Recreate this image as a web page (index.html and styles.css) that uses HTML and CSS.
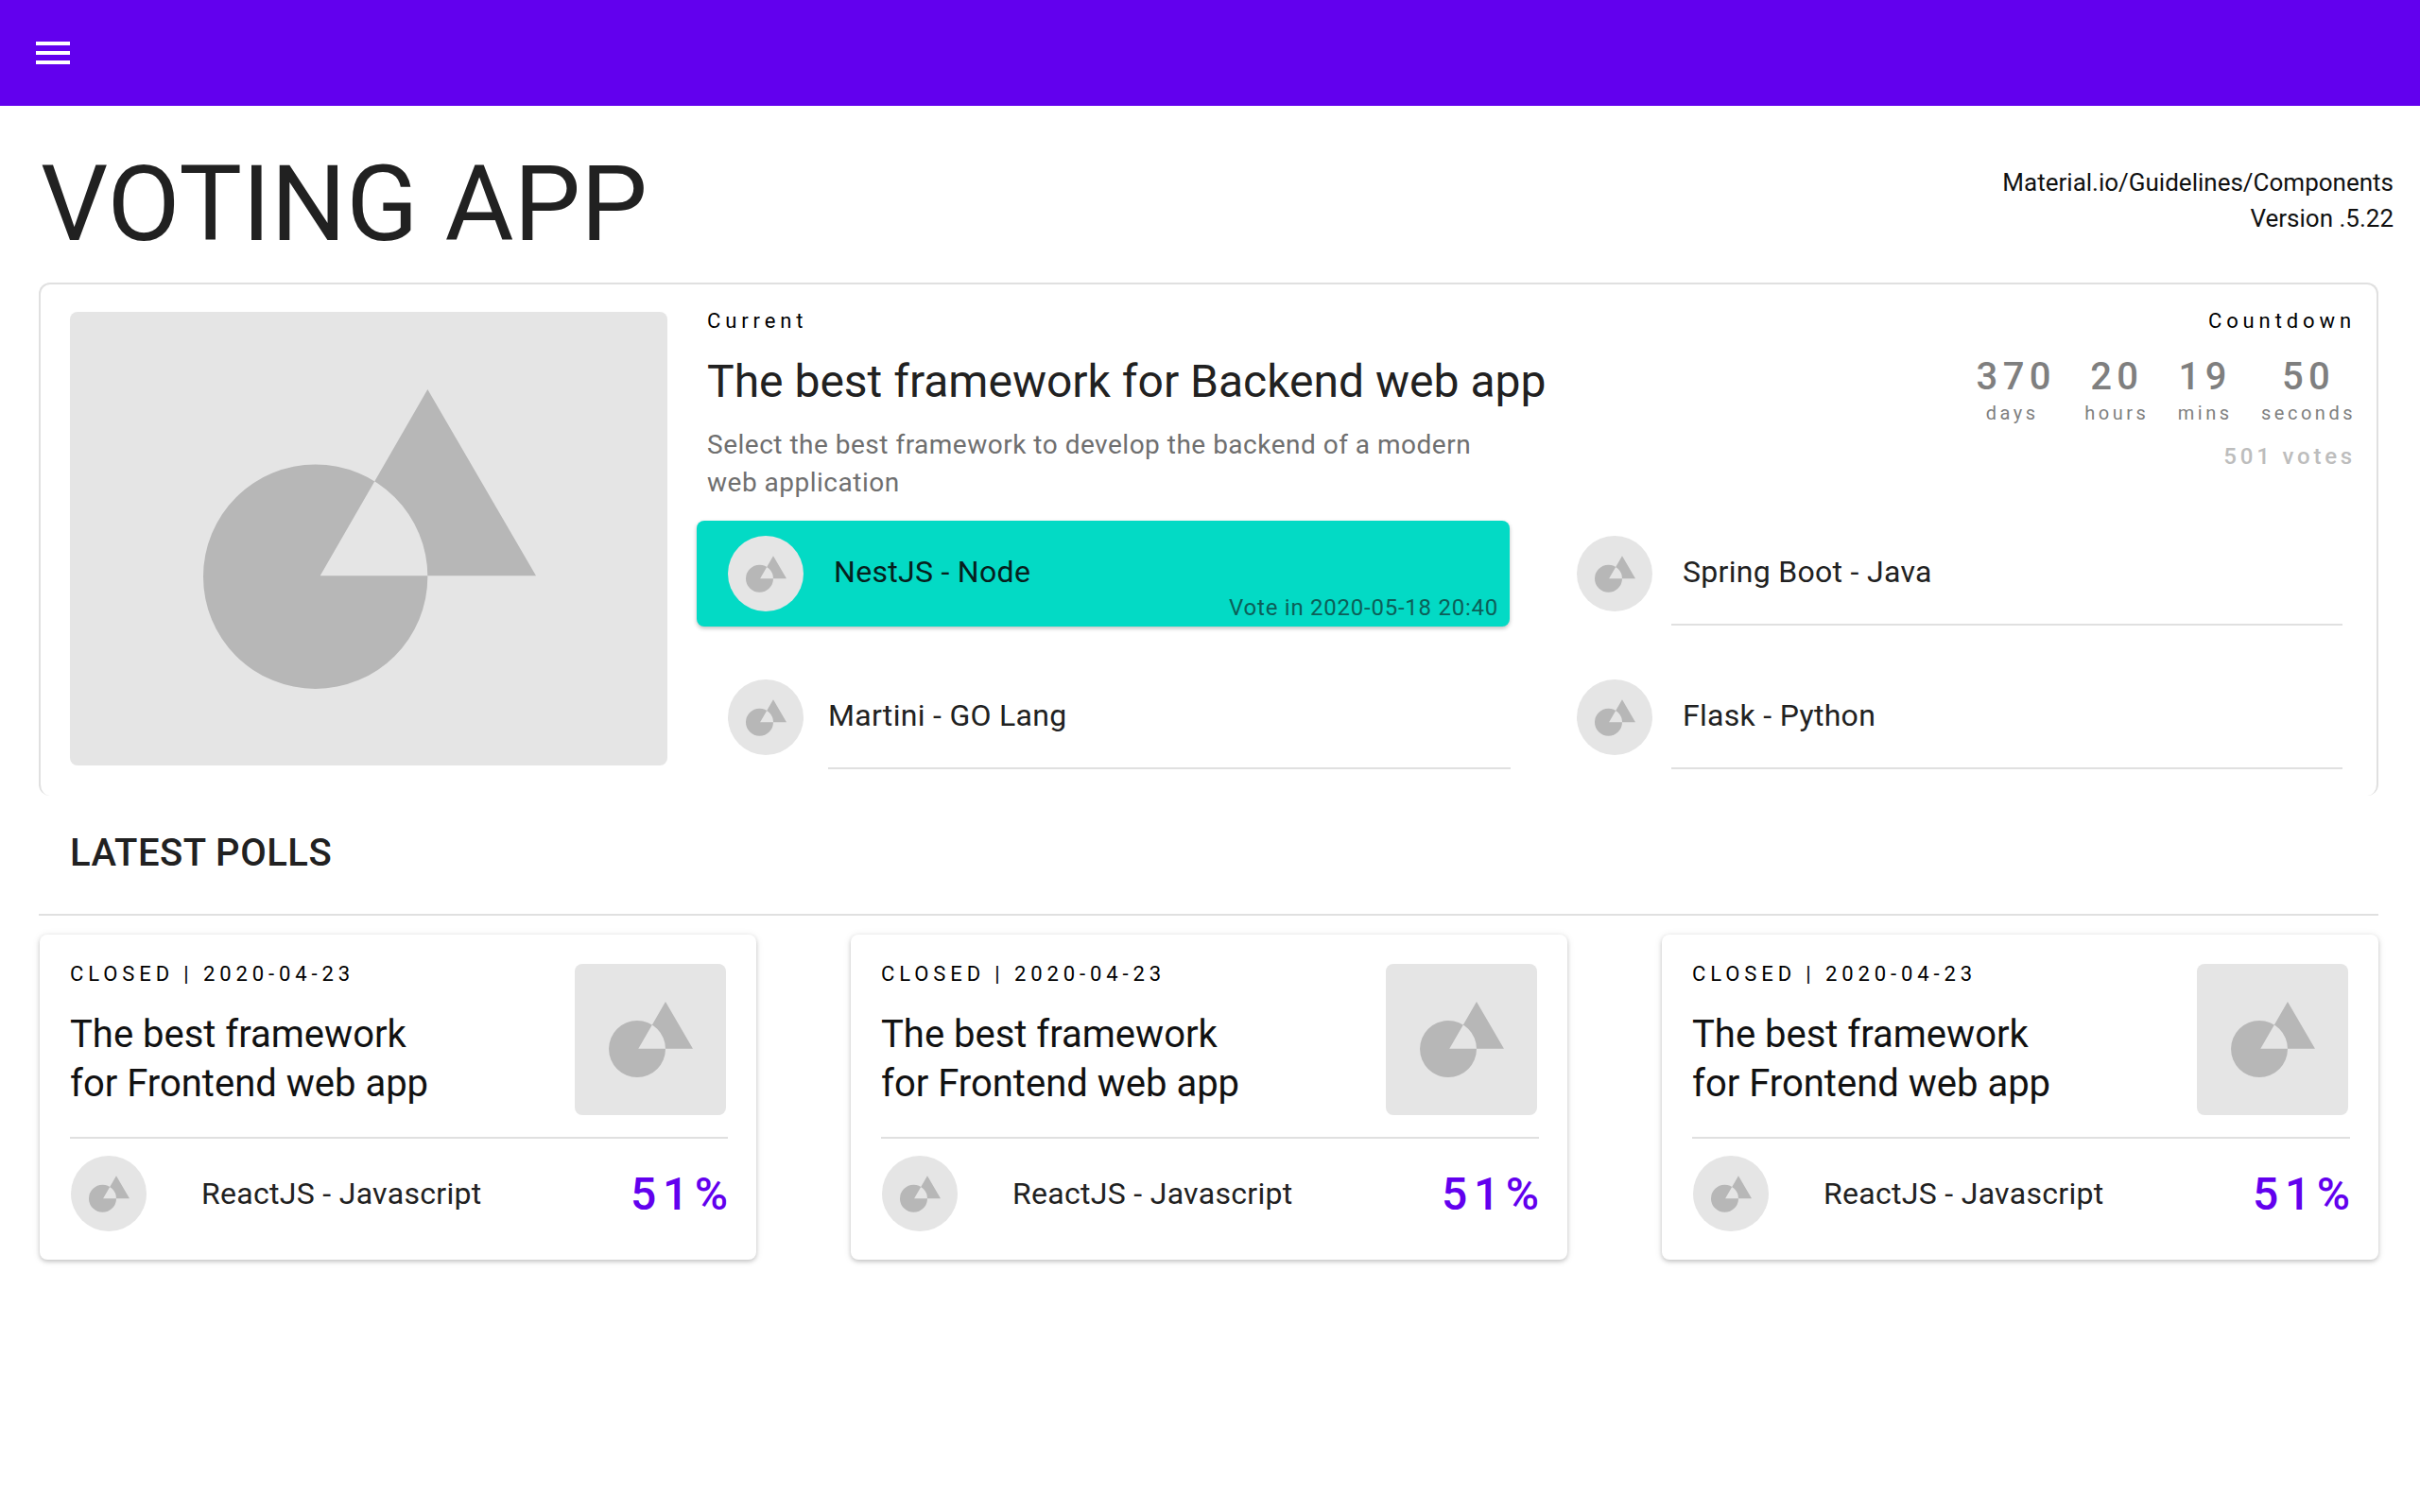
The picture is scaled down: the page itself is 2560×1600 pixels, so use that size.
FILE: index.html
```html
<!DOCTYPE html>
<html lang="en">
<head>
    <meta charset="UTF-8">
    <title>Voting App</title>
    <link rel="stylesheet" href="styles.css">
</head>
<body>
    <svg class="defs" width="0" height="0">
        <symbol id="placeholder" viewBox="0 0 350 315">
            <path fill-rule="evenodd" d="M0 197a118 118 0 0 0 236 0a118 118 0 0 0-236 0zM236 0L123 196H350z"/>
        </symbol>
    </svg>

    <!-- Top bar -->
    <header class="top-bar">
        <svg class="menu-icon" viewBox="0 0 36 24"><path d="M0 0h36v4H0zM0 10h36v4H0zM0 20h36v4H0z"/></svg>
    </header>

    <main class="page">
        <div class="title-row">
            <h1>VOTING APP</h1>
            <p class="meta">Material.io/Guidelines/Components<br>Version .5.22</p>
        </div>

        <!-- Current poll -->
        <section class="current">
            <div class="thumb thumb-large"><svg class="shape shape-large"><use href="#placeholder"/></svg></div>
            <div class="current-body">
                <div class="current-head">
                    <div class="current-text">
                        <div class="overline">Current</div>
                        <h2>The best framework for Backend web app</h2>
                        <p class="desc">Select the best framework to develop the backend of a modern web application</p>
                    </div>
                    <div class="countdown">
                        <div class="overline">Countdown</div>
                        <div class="timer">
                            <div class="unit unit-days"><b>370</b><span>days</span></div>
                            <div class="unit unit-hours"><b>20</b><span>hours</span></div>
                            <div class="unit unit-mins"><b>19</b><span>mins</span></div>
                            <div class="unit unit-secs"><b>50</b><span>seconds</span></div>
                        </div>
                        <div class="votes">501 votes</div>
                    </div>
                </div>
                <div class="options">
                    <div class="option option-selected">
                        <div class="avatar"><svg class="shape"><use href="#placeholder"/></svg></div>
                        <span class="option-name">NestJS - Node</span>
                        <span class="vote-time">Vote in 2020-05-18 20:40</span>
                    </div>
                    <div class="option option-right">
                        <div class="avatar"><svg class="shape"><use href="#placeholder"/></svg></div>
                        <span class="option-name">Spring Boot - Java</span>
                    </div>
                    <div class="option">
                        <div class="avatar"><svg class="shape"><use href="#placeholder"/></svg></div>
                        <span class="option-name">Martini - GO Lang</span>
                    </div>
                    <div class="option option-right">
                        <div class="avatar"><svg class="shape"><use href="#placeholder"/></svg></div>
                        <span class="option-name">Flask - Python</span>
                    </div>
                </div>
            </div>
        </section>

        <!-- Latest polls -->
        <h3>LATEST POLLS</h3>
        <section class="polls">
            <article class="poll">
                <div class="poll-top">
                    <div>
                        <div class="poll-status">CLOSED | 2020-04-23</div>
                        <div class="poll-title">The best framework<br>for Frontend web app</div>
                    </div>
                    <div class="thumb thumb-small"><svg class="shape shape-small"><use href="#placeholder"/></svg></div>
                </div>
                <div class="poll-result">
                    <div class="avatar"><svg class="shape"><use href="#placeholder"/></svg></div>
                    <span class="poll-winner">ReactJS - Javascript</span>
                    <span class="percent">51%</span>
                </div>
            </article>
            <article class="poll">
                <div class="poll-top">
                    <div>
                        <div class="poll-status">CLOSED | 2020-04-23</div>
                        <div class="poll-title">The best framework<br>for Frontend web app</div>
                    </div>
                    <div class="thumb thumb-small"><svg class="shape shape-small"><use href="#placeholder"/></svg></div>
                </div>
                <div class="poll-result">
                    <div class="avatar"><svg class="shape"><use href="#placeholder"/></svg></div>
                    <span class="poll-winner">ReactJS - Javascript</span>
                    <span class="percent">51%</span>
                </div>
            </article>
            <article class="poll">
                <div class="poll-top">
                    <div>
                        <div class="poll-status">CLOSED | 2020-04-23</div>
                        <div class="poll-title">The best framework<br>for Frontend web app</div>
                    </div>
                    <div class="thumb thumb-small"><svg class="shape shape-small"><use href="#placeholder"/></svg></div>
                </div>
                <div class="poll-result">
                    <div class="avatar"><svg class="shape"><use href="#placeholder"/></svg></div>
                    <span class="poll-winner">ReactJS - Javascript</span>
                    <span class="percent">51%</span>
                </div>
            </article>
        </section>
    </main>
</body>
</html>
```

FILE: styles.css
```css
* {
    margin: 0;
    padding: 0;
    box-sizing: border-box;
}

body {
    font-family: Roboto, "Noto Sans", sans-serif;
    background-color: #ffffff;
    color: #212121;
    min-height: 100vh;
}

.defs {
    display: block;
    height: 0;
}

.top-bar {
    height: 112px;
    background-color: #6200ee;
    display: flex;
    align-items: center;
    padding-left: 38px;
}

.menu-icon {
    width: 36px;
    height: 24px;
    fill: #ffffff;
}

.page {
    padding: 0 44px 100px 41px;
}

.title-row {
    height: 187px;
    display: flex;
    justify-content: space-between;
    margin-right: -16px;
}

h1 {
    font-size: 112px;
    font-weight: 400;
    line-height: 131px;
    margin-top: 38px;
    padding-left: 2px;
}

.meta {
    font-size: 26px;
    line-height: 38px;
    color: #111111;
    text-align: right;
    margin-top: 62px;
}

/* Current poll */
.current {
    height: 543px;
    border: 2px solid #e0e0e0;
    border-bottom: none;
    border-radius: 12px;
    display: flex;
    padding: 29px 0 0 31px;
}

.thumb {
    background-color: #e5e5e5;
    border-radius: 8px;
    display: flex;
    align-items: center;
    justify-content: center;
    flex-shrink: 0;
}

.thumb-large {
    width: 632px;
    height: 480px;
}

.thumb-small {
    width: 160px;
    height: 160px;
}

.shape {
    width: 43px;
    height: 39px;
    fill: #b7b7b7;
}

.shape-large {
    width: 352px;
    height: 317px;
    margin-left: 2px;
}

.shape-small {
    width: 89px;
    height: 80px;
}

.current-body {
    flex: 1;
    padding-left: 31px;
}

.current-head {
    height: 221px;
    display: flex;
    justify-content: space-between;
    padding: 0 22px 0 11px;
}

.overline {
    font-size: 22px;
    font-weight: 400;
    line-height: 26px;
    letter-spacing: 4.9px;
    color: #000000;
    margin-top: -3px;
}

h2 {
    font-size: 48px;
    font-weight: 400;
    line-height: 56px;
    margin-top: 23px;
}

.desc {
    width: 830px;
    font-size: 28px;
    line-height: 40px;
    letter-spacing: 0.5px;
    color: #6f6f6f;
    margin-top: 19px;
}

.countdown {
    display: flex;
    flex-direction: column;
    align-items: flex-end;
}

.timer {
    display: flex;
    gap: 30.5px;
    margin-top: 22px;
}

.unit {
    display: flex;
    flex-direction: column;
    align-items: center;
    color: #7f7f7f;
}

.unit b {
    font-size: 40px;
    font-weight: 500;
    line-height: 47px;
    letter-spacing: 5.3px;
}

.unit span {
    font-size: 20px;
    line-height: 24px;
    letter-spacing: 3.5px;
    margin-top: 3px;
}

.unit-days span {
    margin-right: 8px;
}

.votes {
    font-size: 24px;
    font-weight: 500;
    line-height: 27px;
    letter-spacing: 3.8px;
    color: #bdbdbd;
    margin-top: 21px;
}

.options {
    display: grid;
    grid-template-columns: 860px 843px;
    grid-auto-rows: 152px;
    column-gap: 38px;
}

.option {
    height: 112px;
    position: relative;
    display: flex;
    align-items: center;
    padding-left: 33px;
    font-size: 32px;
    letter-spacing: 0.3px;
}

.avatar {
    width: 80px;
    height: 80px;
    border-radius: 50%;
    background-color: #e5e5e5;
    display: flex;
    align-items: center;
    justify-content: center;
    flex-shrink: 0;
}

.option-name {
    flex: 1;
    height: 110px;
    line-height: 106px;
    margin-left: 26px;
    margin-right: -1px;
    border-bottom: 2px solid #e0e0e0;
}

.option-right .option-name {
    padding-left: 12px;
    margin-left: 20px;
    margin-right: 0;
}

.option-selected {
    background-color: #03dac5;
    border-radius: 8px;
    box-shadow: 0 2px 4px rgba(0, 0, 0, 0.25);
    color: #06201d;
}

.option-selected .option-name {
    margin-left: 32px;
    border-bottom: none;
}

/* sits over the bottom corner of the selected row */
.vote-time {
    position: absolute;
    right: 12px;
    bottom: 6px;
    font-size: 24px;
    line-height: 28px;
    letter-spacing: 0.75px;
    color: #0c5f58;
}

/* Latest polls */
h3 {
    font-size: 40px;
    font-weight: 500;
    line-height: 47px;
    height: 127px;
    padding: 37px 0 0 33px;
    letter-spacing: 0.5px;
    border-bottom: 2px solid #e0e0e0;
}

.polls {
    display: flex;
    justify-content: space-between;
    margin-top: 20px;
    padding-left: 1px;
}

.poll {
    width: 758px;
    height: 344px;
    border-radius: 8px;
    box-shadow: 0 2px 4px rgba(0, 0, 0, 0.18), 0 1px 8px rgba(0, 0, 0, 0.1);
    padding: 31px 30px 0 32px;
}

.poll-top {
    height: 185px;
    display: flex;
    justify-content: space-between;
    padding-right: 2px;
    border-bottom: 2px solid #e0e0e0;
}

.poll-status {
    font-size: 22px;
    font-weight: 400;
    line-height: 26px;
    letter-spacing: 4.9px;
    color: #000000;
    margin-top: -2px;
}

.poll-title {
    font-size: 40px;
    line-height: 52px;
    margin-top: 25px;
    color: #111111;
}

.poll-result {
    display: flex;
    align-items: center;
    margin-top: 18px;
}

.poll-result .avatar {
    margin-left: 1px;
}

.poll-winner {
    flex: 1;
    font-size: 32px;
    letter-spacing: 0.3px;
    margin-left: 58px;
}

.percent {
    font-size: 48px;
    font-weight: 500;
    letter-spacing: 6.5px;
    margin-right: -6.5px;
    color: #6200ee;
}
```
